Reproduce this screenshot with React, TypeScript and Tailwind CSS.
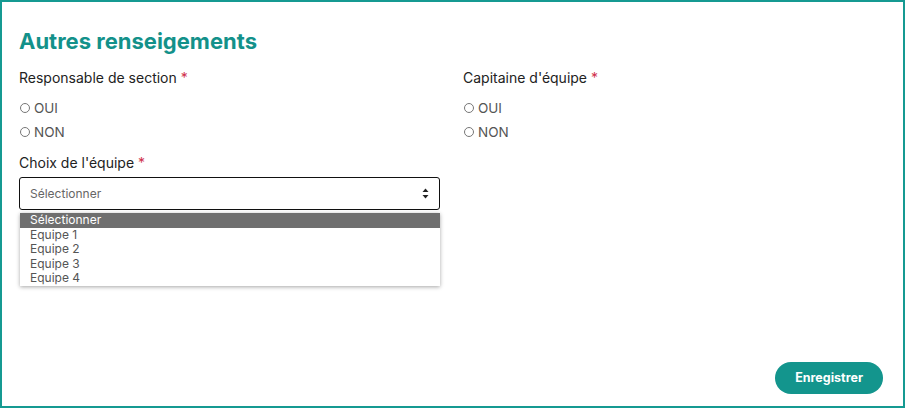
const TEAMS = ['Sélectionner', 'Equipe 1', 'Equipe 2', 'Equipe 3', 'Equipe 4'];

function Radio({ label }: { label: string }) {
  return (
    <label className="flex items-center gap-[4px] h-[24px] text-[13.5px] text-[#555]">
      <span className="w-[10px] h-[10px] rounded-full border border-[#777] bg-white ml-[1px]" />
      <span>{label}</span>
    </label>
  );
}

function Field({ label, children }: { label: string; children: React.ReactNode }) {
  return (
    <div>
      <div className="text-[14px] text-[#222] h-[20px] leading-[20px]">
        {label} <span className="text-[#d0314c]">*</span>
      </div>
      <div className="mt-[8px]">{children}</div>
    </div>
  );
}

export default function App() {
  return (
    <div
      className="w-[905px] h-[408px] border-[2px] border-[#159a92] bg-white flex flex-col px-[17px] pt-[26px] pb-[12px]"
      style={{ fontFamily: 'Inter, "Noto Sans", sans-serif' }}
    >
      <h1 className="text-[22px] font-bold text-[#13918a] leading-[26px]">Autres renseigements</h1>

      <div className="grid grid-cols-2 gap-x-[21px] mt-[14px]">
        <Field label="Responsable de section">
          <Radio label="OUI" />
          <Radio label="NON" />
        </Field>
        <Field label="Capitaine d'équipe">
          <Radio label="OUI" />
          <Radio label="NON" />
        </Field>
      </div>

      <div className="w-[421px] mt-[9px]">
        <div className="text-[14px] text-[#222] h-[20px] leading-[20px]">
          Choix de l'équipe <span className="text-[#d0314c]">*</span>
        </div>
        <div className="relative mt-[4px]">
          <div className="h-[33px] border-[1.5px] border-[#111] rounded-[3px] flex items-center justify-between px-[10px] text-[12px] text-[#666]">
            <span>Sélectionner</span>
            <svg width="7" height="11" viewBox="0 0 7 11">
              <path d="M3.5 0.5 L6.5 4 H0.5 Z" fill="#222" />
              <path d="M3.5 10.5 L6.5 7 H0.5 Z" fill="#222" />
            </svg>
          </div>
          <div className="absolute left-[1px] top-[36px] w-[420px] bg-white shadow-[0_1px_4px_rgba(0,0,0,0.35)] text-[12px] leading-[14.5px]">
            {TEAMS.map((t, i) => (
              <div
                key={t}
                className={`px-[10px] ${i === 0 ? 'bg-[#6f6f6f] text-white' : 'text-[#555]'}`}
              >
                {t}
              </div>
            ))}
          </div>
        </div>
      </div>

      <div className="mt-auto flex justify-end pr-[3px]">
        <button
          type="button"
          className="h-[32px] px-[20px] rounded-full bg-[#13958d] text-white text-[12.5px] font-bold"
        >
          Enregistrer
        </button>
      </div>
    </div>
  );
}
